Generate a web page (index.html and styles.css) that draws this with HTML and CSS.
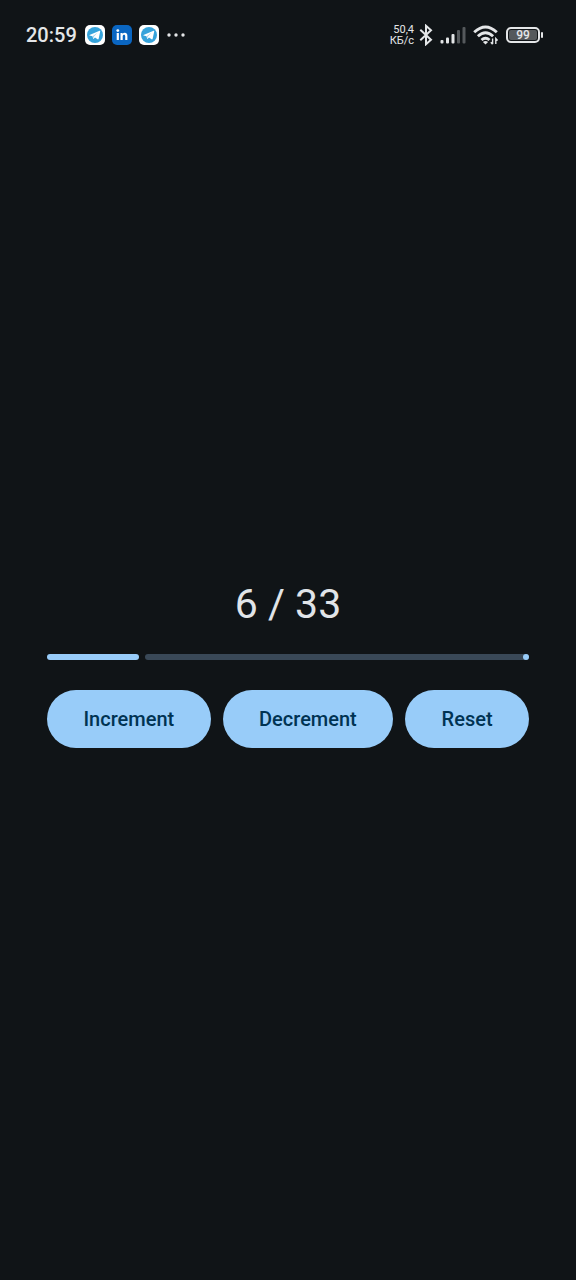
FILE: index.html
```html
<!DOCTYPE html>
<html lang="en">
<head>
<meta charset="utf-8">
<meta name="viewport" content="width=device-width, initial-scale=1">
<title>Counter</title>
<link rel="stylesheet" href="styles.css">
</head>
<body>
<svg class="defs" aria-hidden="true">
  <symbol id="telegram" viewBox="0 0 20 20">
    <rect width="20" height="20" rx="5" fill="#fff"/>
    <circle cx="10" cy="10" r="8" fill="#35a3db"/>
    <path d="M4.5 10 14.6 5.8Q15.4 5.6 15.2 6.5L13.6 14Q13.3 14.8 12.6 14.3L10 12.4 8.7 13.8Q8.2 14.1 8.1 13.5L7.5 11.3 4.6 10.6Q4 10.3 4.5 10Z" fill="#fff"/>
    <path d="M7.6 11.2 12.7 7.6 9 11.5 8.6 13.5Z" fill="#a9d5ec"/>
  </symbol>
</svg>
<header class="status">
  <div class="status-left">
    <time class="clock">20:59</time>
    <div class="apps">
      <svg class="app" role="img" aria-label="Telegram"><use href="#telegram"/></svg>
      <svg class="app" viewBox="0 0 20 20" role="img" aria-label="LinkedIn">
        <rect width="20" height="20" rx="5" fill="#0a66c2"/>
        <circle cx="5.8" cy="5.6" r="1.4" fill="#fff"/>
        <path d="M4.7 8h2.2v7H4.7zM8.5 8h2.1v1c.5-.8 1.2-1.2 2.2-1.2 1.9 0 2.6 1.3 2.6 3.1V15h-2.2v-3.7c0-1-.3-1.6-1.1-1.6-.9 0-1.4.6-1.4 1.6V15H8.5z" fill="#fff"/>
      </svg>
      <svg class="app" role="img" aria-label="Telegram"><use href="#telegram"/></svg>
    </div>
    <svg class="more" viewBox="0 0 18 4" fill="#e4e6e8" aria-hidden="true"><circle cx="2" cy="2" r="1.7"/><circle cx="9" cy="2" r="1.7"/><circle cx="16" cy="2" r="1.7"/></svg>
  </div>
  <div class="status-right">
    <div class="speed"><span>50,4</span><span>КБ/с</span></div>
    <svg class="bluetooth" viewBox="0 0 14 22" fill="none" stroke="#e4e6e8" stroke-width="2" role="img" aria-label="Bluetooth"><path d="M1.3 5.8 12 15.7 7 20.2V1.8l5 4.5L1.3 16.2"/></svg>
    <svg class="signal" viewBox="0 0 26 18" role="img" aria-label="Mobile signal">
      <g fill="#e4e6e8"><rect x="0.5" y="14" width="3" height="3.5" rx="1"/><rect x="6" y="11.5" width="3" height="6" rx="1"/><rect x="11.5" y="8" width="3" height="9.5" rx="1"/></g>
      <g fill="#55595c"><rect x="17" y="4" width="3" height="13.5" rx="1"/><rect x="22.5" y="1" width="3" height="16.5" rx="1"/></g>
    </svg>
    <svg class="wifi" viewBox="0 0 26 20" fill="none" stroke="#e4e6e8" stroke-width="2.9" role="img" aria-label="Wi-Fi">
      <path d="M1.2 7.2Q12.5-3.2 23.8 7.2M4.9 11.2Q12.5 4.2 20.1 11.2M8.5 15Q12.5 11.4 16.5 15"/>
      <path d="M9.9 17.1Q12.5 15.1 15.1 17.1L12.5 19.6Z" fill="#e4e6e8" stroke="none"/>
      <path d="M19.6 13.5V19M17.8 17.2l1.8 2M22.8 19v-5.5l1.8 2" stroke-width="1.4"/>
    </svg>
    <div class="battery"><span class="level">99</span></div>
  </div>
</header>
<main class="counter">
  <div class="panel">
    <h1 class="count">6 / 33</h1>
    <div class="progress" role="progressbar" aria-label="Count" aria-valuemin="0" aria-valuemax="33" aria-valuenow="6">
      <span class="done" style="width:19%"></span>
      <span class="rest"></span>
    </div>
    <div class="actions">
      <button class="action" type="button">Increment</button>
      <button class="action" type="button">Decrement</button>
      <button class="action" type="button">Reset</button>
    </div>
  </div>
</main>
</body>
</html>
```
FILE: styles.css
```css
* { box-sizing: border-box; }
body {
  margin: 0;
  min-height: 100vh;
  display: flex;
  flex-direction: column;
  background: #101417;
  color: #e1e4e8;
  font-family: Roboto, "Noto Sans", sans-serif;
}
.defs { display: none; }
.status {
  height: 70px;
  padding: 0 33px 0 26px;
  display: flex;
  align-items: center;
  justify-content: space-between;
  color: #e4e6e8;
}
.status-left { display: flex; align-items: center; gap: 8px; }
.clock { font-size: 20px; line-height: 24px; font-weight: 500; }
.apps { display: flex; gap: 7px; }
.app { width: 20px; height: 20px; }
.more { width: 18px; height: 4px; }
.status-right { display: flex; align-items: center; gap: 7px; }
.speed {
  display: flex;
  flex-direction: column;
  text-align: right;
  font-size: 11px;
  line-height: 11px;
  font-weight: 400;
}
.bluetooth { width: 14px; height: 22px; margin-left: -2px; }
.signal { width: 26px; height: 18px; }
.wifi { width: 26px; height: 20px; }
.battery {
  position: relative;
  width: 34px;
  height: 16px;
  margin-right: 3px;
  padding: 1px;
  border: 2px solid #e4e6e8;
  border-radius: 5px;
  display: flex;
}
.battery::after {
  content: "";
  position: absolute;
  right: -5px;
  top: 3px;
  width: 2px;
  height: 6px;
  border-radius: 1px;
  background: #e4e6e8;
}
.level {
  flex: 1;
  border-radius: 2px;
  background: #55595c;
  text-align: center;
  font-size: 12px;
  line-height: 10px;
  font-weight: 500;
}
.counter {
  flex: 1;
  padding: 0 47px 24px;
  display: flex;
  align-items: center;
  justify-content: center;
}
.panel {
  flex: 1;
  max-width: 560px;
  display: flex;
  flex-direction: column;
}
.count {
  margin: 0 0 24px;
  text-align: center;
  font-size: 41px;
  line-height: 52px;
  font-weight: 400;
}
.progress { display: flex; gap: 6px; height: 6px; margin-bottom: 30px; }
.done { border-radius: 3px; background: #98ccf9; }
.rest {
  flex: 1;
  display: flex;
  justify-content: flex-end;
  border-radius: 3px;
  background: #394857;
}
.rest::after {
  content: "";
  width: 6px;
  border-radius: 3px;
  background: #98ccf9;
}
.actions { display: flex; flex-wrap: wrap; gap: 12px; }
.action {
  flex: 1 1 auto;
  height: 58px;
  padding: 0 35px;
  border: 0;
  border-radius: 29px;
  background: #98ccf9;
  color: #003353;
  font: 500 20px/28px Roboto, "Noto Sans", sans-serif;
  white-space: nowrap;
}
```
